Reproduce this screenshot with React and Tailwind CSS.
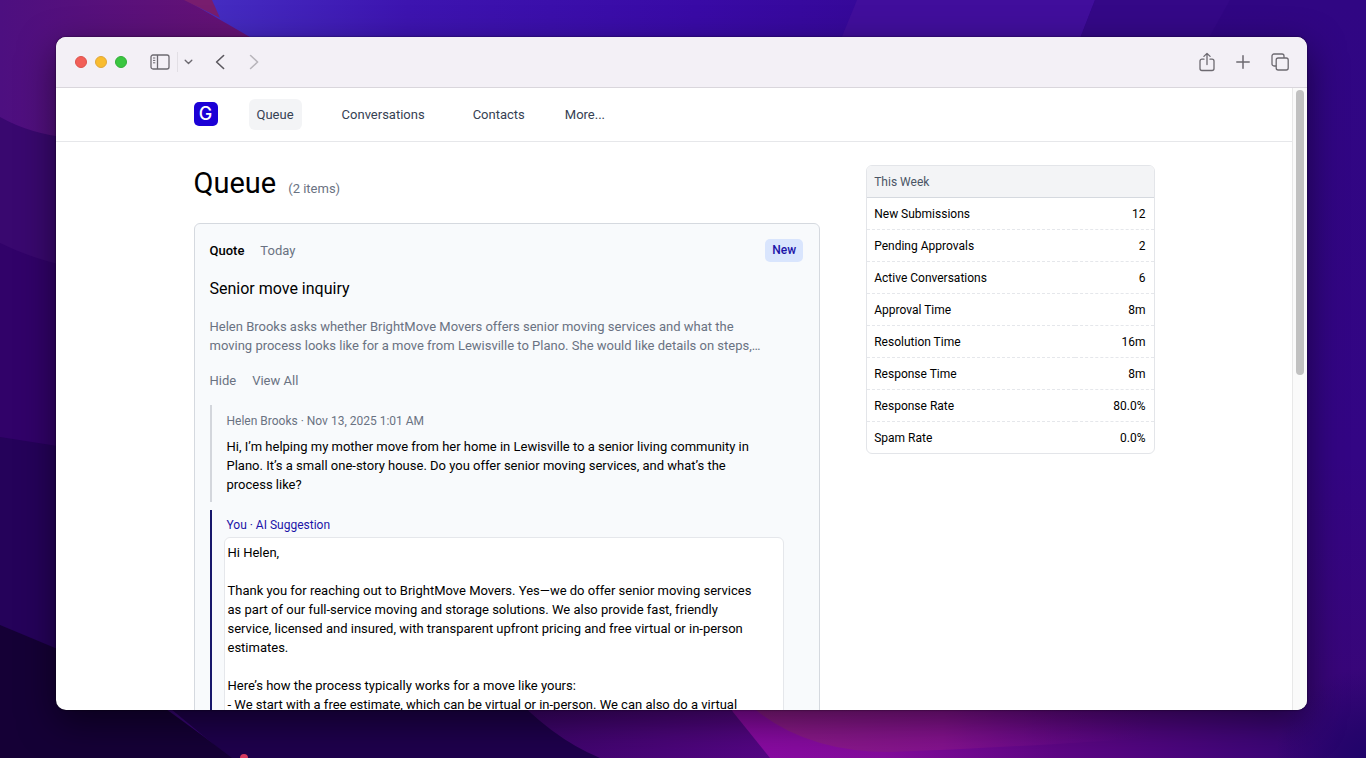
import { useState } from "react";

const NAV_ITEMS = [
  { label: "Queue", href: "#queue", className: "px-2 bg-gray-100" },
  { label: "Conversations", href: "#conversations", className: "ml-8 px-2" },
  { label: "Contacts", href: "#contacts", className: "ml-8 px-2" },
  { label: "More...", href: "#more", className: "ml-6 px-2" },
];

const STATS = [
  { label: "New Submissions", value: "12" },
  { label: "Pending Approvals", value: "2" },
  { label: "Active Conversations", value: "6" },
  { label: "Approval Time", value: "8m" },
  { label: "Resolution Time", value: "16m" },
  { label: "Response Time", value: "8m" },
  { label: "Response Rate", value: "80.0%" },
  { label: "Spam Rate", value: "0.0%" },
];

const SUGGESTION = `Hi Helen,

Thank you for reaching out to BrightMove Movers. Yes—we do offer senior moving services as part of our full-service moving and storage solutions. We also provide fast, friendly service, licensed and insured, with transparent upfront pricing and free virtual or in-person estimates.

Here’s how the process typically works for a move like yours:
- We start with a free estimate, which can be virtual or in-person. We can also do a virtual`;

function Wallpaper() {
  return (
    <svg
      className="absolute inset-0 w-full h-full"
      viewBox="0 0 1366 758"
      preserveAspectRatio="none"
      aria-hidden="true"
    >
      <defs>
        <linearGradient id="top" x1="0" x2="1">
          <stop offset="0" stopColor="#4630c4" />
          <stop offset="0.22" stopColor="#3d14b0" />
          <stop offset="0.5" stopColor="#390aa6" />
          <stop offset="1" stopColor="#2f057f" />
        </linearGradient>
        <linearGradient id="plum" x1="0" x2="1">
          <stop offset="0" stopColor="#4d0f80" />
          <stop offset="1" stopColor="#6c1372" />
        </linearGradient>
        <linearGradient id="right" x1="0" y1="0" x2="0" y2="1">
          <stop offset="0" stopColor="#300683" />
          <stop offset="0.6" stopColor="#330584" />
          <stop offset="1" stopColor="#3a0676" />
        </linearGradient>
        <linearGradient id="bottom" x1="0" x2="1">
          <stop offset="0" stopColor="#8a0aa4" />
          <stop offset="0.3" stopColor="#840c9c" />
          <stop offset="0.6" stopColor="#5d0685" />
          <stop offset="1" stopColor="#3a0676" />
        </linearGradient>
        <linearGradient id="violet" x1="0" x2="1">
          <stop offset="0" stopColor="#3a0468" />
          <stop offset="1" stopColor="#5a068a" />
        </linearGradient>
        <linearGradient id="glow" x1="0" x2="1">
          <stop offset="0" stopColor="#8c1c86" />
          <stop offset="0.5" stopColor="#84128e" />
          <stop offset="1" stopColor="#5d0685" stopOpacity="0" />
        </linearGradient>
        <radialGradient id="corner" cx="1" cy="1" r="1">
          <stop offset="0" stopColor="#20046a" />
          <stop offset="0.3" stopColor="#26046c" />
          <stop offset="1" stopColor="#26046c" stopOpacity="0" />
        </radialGradient>
      </defs>
      <rect width="1366" height="758" fill="url(#right)" />
      <rect x="180" width="1030" height="300" fill="url(#top)" />
      <path d="M857 0H1095L1060 90H820Z" fill="#410e9c" />
      <path d="M1095 0H1230L1180 90H1060Z" fill="#340887" />
      <path d="M0 0H186L300 66V160H0Z" fill="url(#plum)" />
      <path d="M184 0H212L220 18Z" fill="#781d6e" />
      <path d="M0 117Q30 134 70 138V300H0Z" fill="#39086f" />
      <path d="M0 243Q30 258 70 267V470H0Z" fill="#310269" />
      <path d="M0 437L70 448V680H0Z" fill="#25025a" />
      <path d="M100 650L230 758H760L560 640Z" fill="#1e004c" />
      <path d="M0 625Q60 650 110 671Q170 710 232 758H0Z" fill="#150036" />
      <path d="M500 680Q545 735 600 758H830L720 670Z" fill="url(#violet)" />
      <path d="M710 670L733 712L770 758H1290V670Z" fill="url(#bottom)" />
      <path d="M735 690Q790 752 890 752Q1000 748 1150 738V690Z" fill="url(#glow)" />
      <rect x="1276" y="668" width="90" height="90" fill="url(#corner)" />
      <circle cx="244" cy="758" r="4" fill="#d83a60" />
    </svg>
  );
}

function Toolbar() {
  return (
    <div className="flex shrink-0 items-center justify-between h-[51px] pl-[19px] pr-[17px] pb-px bg-[#f3f0f6] border-b border-[#d9d6dc] text-[#6c6970]">
      <div className="flex items-center">
        <div className="flex gap-2">
          <span className="size-3 rounded-full bg-[#f25f58] border border-[#dd524c]" />
          <span className="size-3 rounded-full bg-[#f9bc2f] border border-[#e0a73a]" />
          <span className="size-3 rounded-full bg-[#3ac640] border border-[#32ae38]" />
        </div>
        <button type="button" aria-label="Toggle sidebar" className="ml-[23px]">
          <svg width="20" height="16" viewBox="0 0 20 16" fill="none" stroke="currentColor" strokeWidth="1.3">
            <rect x="1" y="1" width="18" height="14" rx="2" />
            <path d="M7.5 1v14" />
            <path d="M3 4h2.3M3 6.4h2.3M3 8.8h2.3" strokeWidth="1" />
          </svg>
        </button>
        <span className="ml-[7px] w-px h-5 bg-[#e2dfe5]" />
        <button type="button" aria-label="Tab groups" className="ml-1.5">
          <svg width="9" height="6" viewBox="0 0 9 6" fill="none" stroke="currentColor" strokeWidth="1.4" strokeLinecap="round" strokeLinejoin="round">
            <path d="M1.2 1.3L4.5 4.4L7.8 1.3" />
          </svg>
        </button>
        <button type="button" aria-label="Back" className="ml-[22px] text-[#5b585f]">
          <svg width="10" height="16" viewBox="0 0 10 16" fill="none" stroke="currentColor" strokeWidth="1.6" strokeLinecap="round" strokeLinejoin="round">
            <path d="M8.6 1.5L1.6 8L8.6 14.5" />
          </svg>
        </button>
        <button type="button" aria-label="Forward" className="ml-6 text-[#b8b5bb]">
          <svg width="10" height="16" viewBox="0 0 10 16" fill="none" stroke="currentColor" strokeWidth="1.6" strokeLinecap="round" strokeLinejoin="round">
            <path d="M1.6 1.5L8.6 8L1.6 14.5" />
          </svg>
        </button>
      </div>
      <div className="flex items-center gap-[19px]">
        <button type="button" aria-label="Share">
          <svg width="18" height="20" viewBox="0 0 18 20" fill="none" stroke="currentColor" strokeWidth="1.3" strokeLinecap="round" strokeLinejoin="round">
            <path d="M6 7.2H4a2 2 0 0 0-2 2V16.5a2 2 0 0 0 2 2H14a2 2 0 0 0 2-2V9.2a2 2 0 0 0-2-2H12" />
            <path d="M9 12.5V1.6M5.9 4.4L9 1.4L12.1 4.4" />
          </svg>
        </button>
        <button type="button" aria-label="New tab">
          <svg width="16" height="16" viewBox="0 0 16 16" fill="none" stroke="currentColor" strokeWidth="1.5" strokeLinecap="round">
            <path d="M8 1.8V14.2M1.8 8H14.2" />
          </svg>
        </button>
        <button type="button" aria-label="Show tabs">
          <svg width="20" height="20" viewBox="0 0 20 20" fill="none" stroke="currentColor" strokeWidth="1.3" strokeLinejoin="round">
            <rect x="6.2" y="6" width="12" height="12" rx="2" />
            <path d="M6.2 14H4a2 2 0 0 1-2-2V4a2 2 0 0 1 2-2H12a2 2 0 0 1 2 2V6" />
          </svg>
        </button>
      </div>
    </div>
  );
}

function NavBar() {
  return (
    <header className="border-b border-[#e6e7ea]">
      <div className="flex items-center max-w-[961px] h-[53px] mx-auto pb-px">
        <a
          href="#home"
          aria-label="Home"
          className="flex items-center justify-center size-6 rounded-[5px] bg-[#1b00d6] text-white text-[18px] leading-6 font-medium font-['Inter',sans-serif]"
        >
          G
        </a>
        <nav className="flex ml-[31px] text-[13px] leading-[19px] text-gray-700">
          {NAV_ITEMS.map((item) => (
            <a key={item.label} href={item.href} className={`py-1.5 rounded-md ${item.className}`}>
              {item.label}
            </a>
          ))}
        </nav>
      </div>
    </header>
  );
}

function QueueCard() {
  const [open, setOpen] = useState(true);
  const [reply, setReply] = useState(SUGGESTION);

  return (
    <article className="mt-[22px] pl-[15px] pr-4 pt-[15px] pb-6 rounded-md border border-[#d5d9df] bg-[#f8fafc]">
      <div className="flex items-center justify-between">
        <div className="flex gap-4 text-[13px] leading-[19px]">
          <span className="font-medium">Quote</span>
          <span className="text-gray-500">Today</span>
        </div>
        <span className="px-[7px] py-[3px] rounded-[5px] bg-[#d9e5fd] text-[#1c14a8] text-xs leading-[17px] font-medium">
          New
        </span>
      </div>
      <h2 className="mt-[15px] text-base leading-6">Senior move inquiry</h2>
      <p className="mt-4 mr-8 text-[13px] leading-[19px] text-gray-500">
        Helen Brooks asks whether BrightMove Movers offers senior moving services and what the
        moving process looks like for a move from Lewisville to Plano. She would like details on
        steps,…
      </p>
      <div className="flex gap-4 mt-4 text-[13px] leading-[19px] text-gray-500">
        <button type="button" onClick={() => setOpen(!open)}>
          {open ? "Hide" : "Show"}
        </button>
        <button type="button">View All</button>
      </div>

      {open && (
        <div className="mt-[15px] mr-[19px] space-y-2">
          <div className="pl-[15px] py-2 border-l-2 border-[#d3d6dc]">
            <p className="text-xs leading-4 text-gray-500">Helen Brooks · Nov 13, 2025 1:01 AM</p>
            <p className="mt-2 pr-6 text-[13px] leading-[19px]">
              Hi, I’m helping my mother move from her home in Lewisville to a senior living
              community in Plano. It’s a small one-story house. Do you offer senior moving services,
              and what’s the process like?
            </p>
          </div>
          <div className="pl-3 py-[7px] border-l-2 border-[#17176b]">
            <label htmlFor="reply" className="block pl-[3px] text-xs leading-4 text-[#1c14a8]">
              You · AI Suggestion
            </label>
            <textarea
              id="reply"
              rows={14}
              value={reply}
              onChange={(e) => setReply(e.target.value)}
              className="block w-full mt-1 pl-[3px] pr-5 py-[5px] rounded-md border border-gray-200 bg-white text-[13px] leading-[19px] resize-none overflow-hidden"
            />
          </div>
        </div>
      )}
    </article>
  );
}

function WeekStats() {
  return (
    <div className="rounded-md border border-[#e3e5e9] overflow-hidden">
      <table className="w-full text-xs leading-[15px]">
        <thead>
          <tr className="bg-gray-100 border-b border-[#d5d9df]">
            <th colSpan={2} className="px-[7px] pt-[9px] pb-[7px] text-left font-normal text-gray-600">
              This Week
            </th>
          </tr>
        </thead>
        <tbody className="divide-y divide-dashed divide-gray-200">
          {STATS.map((stat) => (
            <tr key={stat.label}>
              <th scope="row" className="px-[7px] pt-[9px] pb-[7px] text-left font-normal">
                {stat.label}
              </th>
              <td className="px-2 pt-[9px] pb-[7px] text-right">{stat.value}</td>
            </tr>
          ))}
        </tbody>
      </table>
    </div>
  );
}

export default function App() {
  return (
    <div className="relative h-screen overflow-hidden pt-[37px] pb-12 pl-14 pr-[59px] bg-[#300683] font-['Roboto',sans-serif] text-black">
      <Wallpaper />
      <div className="relative flex flex-col h-full rounded-[10px] overflow-hidden bg-white shadow-[0_12px_36px_rgba(0,0,0,0.5),0_0_2px_rgba(0,0,0,0.7)]">
        <Toolbar />
        <div className="flex flex-1 min-h-0">
          <div className="flex-1 min-w-0 overflow-hidden">
            <NavBar />
            <main className="flex items-start gap-[46px] max-w-[961px] mx-auto pt-[23px]">
              <section className="flex-1 min-w-0">
                <div className="flex items-baseline gap-3">
                  <h1 className="text-[29px] leading-9">Queue</h1>
                  <span className="text-[13px] text-gray-500">(2 items)</span>
                </div>
                <QueueCard />
              </section>
              <aside className="w-[30%] shrink-0">
                <WeekStats />
              </aside>
            </main>
          </div>
          <div className="w-[15px] shrink-0 pl-[3px] pt-[2px] border-l border-[#e8e8e8] bg-[#fafafa]">
            <div className="w-2 h-[46%] rounded-full bg-[#c1c1c1]" />
          </div>
        </div>
      </div>
    </div>
  );
}
